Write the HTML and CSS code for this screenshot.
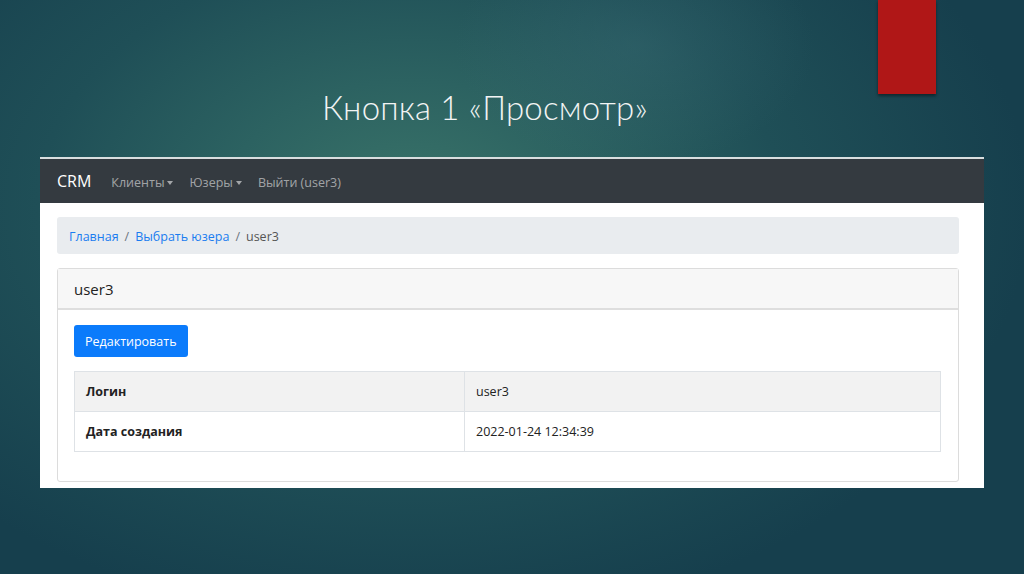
FILE: index.html
```html
<!doctype html>
<html>
<head>
  <meta charset="utf-8">
  <meta name="viewport" content="width=device-width, initial-scale=1">
  <title>Кнопка 1 «Просмотр»</title>
  <link rel="stylesheet" href="styles.css">
</head>
<body>

  <div class="slide">
    <div class="accent"></div>

    <h1 class="title">Кнопка 1 «Просмотр»</h1>

    <div class="shot">
      <nav class="navbar">
        <span class="brand">CRM</span>
        <span class="nav-link caret">Клиенты</span>
        <span class="nav-link caret">Юзеры</span>
        <span class="nav-link">Выйти (user3)</span>
      </nav>

      <div class="content">
        <ol class="breadcrumb">
          <li><a href="#">Главная</a></li>
          <li><a href="#">Выбрать юзера</a></li>
          <li class="active">user3</li>
        </ol>

        <div class="card">
          <div class="card-header">user3</div>
          <div class="card-body">
            <a href="#" class="btn">Редактировать</a>
            <table class="table">
              <tr>
                <th>Логин</th>
                <td>user3</td>
              </tr>
              <tr>
                <th>Дата создания</th>
                <td>2022-01-24 12:34:39</td>
              </tr>
            </table>
          </div>
        </div>
      </div>
    </div>
  </div>

</body>
</html>
```

FILE: styles.css
```css
html, body {
  margin: 0;
  padding: 0;
}

body {
  font-family: "Open Sans", "Noto Sans", sans-serif;
}

.slide {
  position: relative;
  width: 1024px;
  height: 574px;
  overflow: hidden;
  display: flex;
  flex-direction: column;
  background:
    radial-gradient(ellipse 180px 120px at 62% 8%, rgba(60, 110, 120, 0.35), rgba(60, 110, 120, 0) 100%),
    radial-gradient(ellipse 620px 420px at 40% 36%, #3a7469 0%, #2c6261 30%, #1f4f57 60%, #163f4d 100%);
}

.accent {
  position: absolute;
  left: 878px;
  top: 0;
  width: 58px;
  height: 94px;
  background: #b01717;
  box-shadow: 0 2px 3px rgba(0, 0, 0, 0.45);
}

.title {
  margin: 82px 0 0 322px;
  height: 75px;
  font-family: "Lato", "Open Sans", sans-serif;
  font-weight: 300;
  font-size: 33px;
  line-height: 50px;
  color: #f2f4f4;
  letter-spacing: 0.2px;
}

.shot {
  margin-left: 40px;
  width: 944px;
  border-top: 2px solid #d9dedf;
  background: #fff;
}

.navbar {
  display: flex;
  align-items: center;
  height: 44px;
  padding: 2px 17px 0;
  box-sizing: border-box;
  background: #343a40;
}

.brand {
  font-size: 16px;
  color: #fff;
  margin-right: 20px;
  margin-top: -2px;
}

.nav-link {
  font-size: 12.5px;
  color: rgba(255, 255, 255, 0.55);
  margin-right: 16px;
}

.caret:after {
  content: '';
  display: inline-block;
  margin-left: 3px;
  vertical-align: 2px;
  border-top: 4px solid rgba(255, 255, 255, 0.55);
  border-left: 3.5px solid transparent;
  border-right: 3.5px solid transparent;
}

.content {
  padding: 14px 25px 6px 17px;
}

.breadcrumb {
  display: flex;
  align-items: center;
  list-style: none;
  margin: 0 0 14px;
  padding: 1px 12px 0;
  height: 37px;
  box-sizing: border-box;
  border-radius: 3px;
  background: #e9ecef;
  font-size: 12.5px;
  color: #6c757d;
}

.breadcrumb a {
  color: #1a7cf0;
  text-decoration: none;
}

.breadcrumb li + li:before {
  content: '/';
  padding: 0 6px;
  color: #6c757d;
}

.breadcrumb .active {
  color: #555;
}

.card {
  border: 1px solid #dcdcdc;
  border-radius: 3px;
}

.card-header {
  display: flex;
  align-items: center;
  height: 39px;
  padding: 1px 16px 0;
  box-sizing: border-box;
  background: #f7f7f7;
  border-bottom: 2px solid #dedede;
  height: 41px;
  font-size: 15px;
  color: #222;
}

.card-body {
  padding: 15px 17px 16px 16px;
}

.btn {
  display: inline-flex;
  align-items: center;
  height: 32px;
  padding: 0 11px;
  border-radius: 3px;
  background: #0b7bfb;
  color: #fff;
  font-size: 12.5px;
  text-decoration: none;
  margin-bottom: 14px;
}

.table {
  width: 100%;
  border-collapse: collapse;
  font-size: 12.5px;
  color: #222;
  margin-bottom: 13px;
}

.table th,
.table td {
  height: 39px;
  padding: 0 11px;
  border: 1px solid #dee2e6;
  text-align: left;
}

.table th {
  width: 367px;
  font-weight: 700;
}

.table tr:first-child {
  background: #f2f2f2;
}
```
